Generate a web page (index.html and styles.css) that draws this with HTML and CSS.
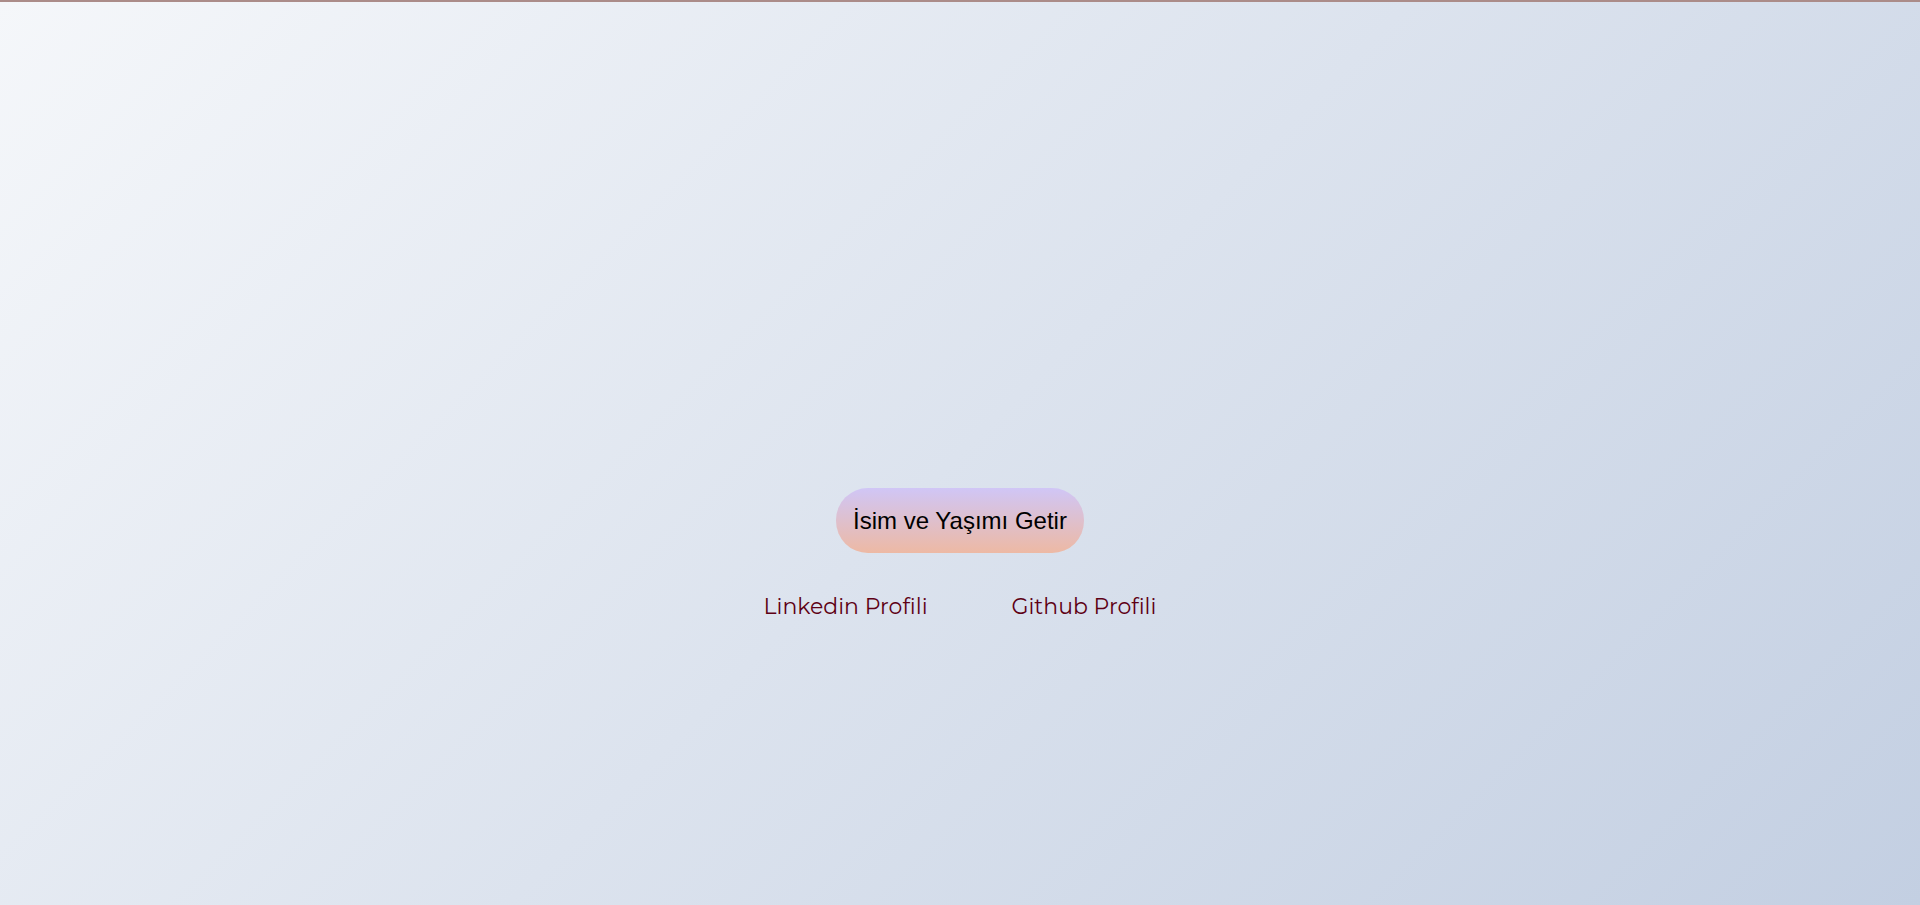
FILE: index.html
```html
<!DOCTYPE html>
<html lang="tr">
<head>
  <meta charset="utf-8">
  <title>Profil</title>
  <link rel="stylesheet" href="styles.css">
</head>
<body class="page">
  <main class="content">
    <button class="fetch-button" type="button">İsim ve Yaşımı Getir</button>
    <nav class="links">
      <a class="link" href="#linkedin">Linkedin Profili</a>
      <a class="link" href="#github">Github Profili</a>
    </nav>
  </main>
</body>
</html>
```
FILE: styles.css
```css
.page {
  box-sizing: border-box;
  min-height: 100vh;
  margin: 0;
  display: flex;
  align-items: center;
  justify-content: center;
  border-top: 2px solid #ab8c89;
  background: linear-gradient(135deg, #f5f7fa, #c3cfe2);
  font-family: Montserrat, Inter, sans-serif;
}

.content {
  display: flex;
  flex-direction: column;
  align-items: center;
  gap: 40px;
  padding-top: 202px;
}

.fetch-button {
  padding: 20px 17px;
  border: 0;
  border-radius: 32px;
  background: linear-gradient(#d0c6f6, #edb9a4);
  color: #000;
  font: 24px/25px "Liberation Sans", Arial, sans-serif;
  cursor: pointer;
}

.links {
  display: flex;
  gap: 84px;
}

.link {
  color: #5e0014;
  font-size: 22px;
  line-height: 28px;
  text-decoration: none;
}
```
